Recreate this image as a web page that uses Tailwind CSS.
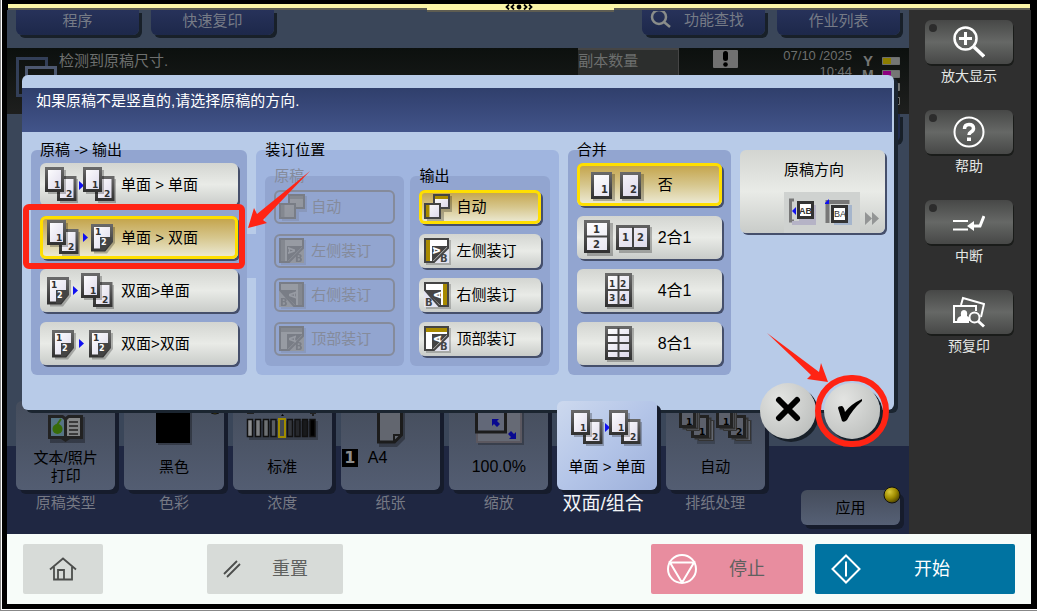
<!DOCTYPE html>
<html lang="zh-CN">
<head>
    <meta charset="UTF-8">
    <meta name="viewport" content="width=device-width, initial-scale=1.0">
    <title>双面/组合</title>
    <script src="https://cdn.jsdelivr.net/npm/@tailwindcss/browser@4"></script>
</head>
<body class="bg-black font-['Liberation_Sans','Noto_Sans_CJK_SC',sans-serif] text-[15px] leading-[18px] text-black">

<!-- shared icons -->
<svg class="absolute size-0" aria-hidden="true">
    <defs>
        <linearGradient id="paper" x1="0" y1="0" x2="1" y2="1"><stop offset="0" stop-color="#fff"/><stop offset="1" stop-color="#dcd8ea"/></linearGradient>
        <linearGradient id="edge" x1="0" y1="0" x2="0" y2="1"><stop offset="0" stop-color="#686868"/><stop offset="1" stop-color="#333"/></linearGradient>
        <radialGradient id="gold" cx=".35" cy=".3" r=".8"><stop offset="0" stop-color="#d9c93a"/><stop offset=".5" stop-color="#a08c00"/><stop offset="1" stop-color="#3c3400"/></radialGradient>
        <g id="sheets" font-family="DejaVu Sans" font-weight="bold" font-size="9" fill="#333">
            <path d="M15 12h18v24H15z" fill="#000" opacity=".25"/>
            <path d="M13.500 10.500h16.500v22H13.500z" fill="url(#paper)" stroke="url(#edge)" stroke-width="3"/>
            <text x="21" y="30">2</text>
            <path d="M3 3h18v24H3z" fill="#000" opacity=".25"/>
            <path d="M1.500 1.500h16v22h-16z" fill="url(#paper)" stroke="url(#edge)" stroke-width="3"/>
            <text x="9" y="21">1</text>
        </g>
        <g id="duplex" font-family="DejaVu Sans" font-weight="bold" font-size="9">
            <path d="M3 3h21v16l-8 10.500H3z" fill="#000" opacity=".25"/>
            <path d="M1.500 1.500h19v16l-7 8.500h-12z" fill="url(#paper)" stroke="url(#edge)" stroke-width="3"/>
            <path d="M9 13h11.500v5l-7 8.500H9z" fill="#444"/>
            <text x="4" y="11" fill="#333">1</text>
            <text x="10" y="21" font-size="8" fill="#fff">2</text>
        </g>
        <path id="next" d="M0 0l5 4.500L0 9z" fill="#1010f0"/>
        <g id="bind-auto">
            <path d="M11 2h17v16H11zM3 11h17v17H3z" fill="#000" opacity=".25"/>
            <path d="M10 1h15v13H10z" fill="url(#paper)" stroke="#444" stroke-width="2"/>
            <path d="M11 2h13v3H11z" fill="#a88a00"/>
            <path d="M1 10h15v14H1z" fill="url(#paper)" stroke="#444" stroke-width="2"/>
            <path d="M2 11h3.500v12H2z" fill="#a88a00"/>
        </g>
        <g id="bind-left" font-family="DejaVu Sans" font-weight="bold">
            <path d="M2 2h25v25H2z" fill="#000" opacity=".2"/>
            <path d="M0 0h25v25H0z" fill="#e4e4f0"/>
            <path d="M1 1h23v9L10 24H1z" fill="#fff" stroke="#444" stroke-width="2"/>
            <path d="M2 2h4v21H2z" fill="#a88a00"/>
            <path d="M8 8h16L8 24z" fill="#444"/>
            <text transform="translate(9 9) rotate(90)" font-size="9" fill="#fff">A</text>
            <text x="16" y="24" font-size="10" fill="#444">B</text>
        </g>
        <g id="bind-right" font-family="DejaVu Sans" font-weight="bold">
            <path d="M2 2h25v25H2z" fill="#000" opacity=".2"/>
            <path d="M0 0h25v25H0z" fill="#e4e4f0"/>
            <path d="M1 1h23v23H15L1 8z" fill="#fff" stroke="#444" stroke-width="2"/>
            <path d="M19 2h4v21h-4z" fill="#a88a00"/>
            <path d="M1 8h16v16z" fill="#444"/>
            <text transform="translate(17 16.500) rotate(-90)" font-size="9" fill="#fff">A</text>
            <text x="1" y="24" font-size="10" fill="#444">B</text>
        </g>
        <g id="bind-top" font-family="DejaVu Sans" font-weight="bold">
            <path d="M2 2h25v25H2z" fill="#000" opacity=".2"/>
            <path d="M0 0h25v25H0z" fill="#e4e4f0"/>
            <path d="M1 1h23v9L10 24H1z" fill="#fff" stroke="#444" stroke-width="2"/>
            <path d="M2 2h21v4H2z" fill="#a88a00"/>
            <path d="M8 8h16L8 24z" fill="#444"/>
            <text transform="translate(17 16.500) rotate(-90)" font-size="9" fill="#fff">A</text>
            <text x="16" y="24" font-size="10" fill="#444">B</text>
        </g>
    </defs>
</svg>

<div class="border-b border-l border-[#888]">
<div class="flex min-h-[calc(100vh-1px)] flex-col border-b border-l border-white bg-black pt-1 pr-[6px] pb-[5px] pl-[5px]">

    <!-- pull-down handle -->
    <div class="relative mx-px h-[6px] border-b-2 border-[#5e5d52] bg-[#fbf5a6]">
        <div class="absolute top-0 left-[41%] z-20 flex h-2 w-[187px] items-center justify-center border-b-2 border-[#5e5d52] bg-[#fbf5a6]">
            <svg class="mr-1" width="30" height="6" viewBox="0 0 30 6" fill="none" stroke="#000" stroke-width="1.800"><path d="M5 .5L2.500 3 5 5.500M10 .5L7.500 3 10 5.500M20 .5L22.500 3 20 5.500M25 .5L27.500 3 25 5.500"/><circle cx="15" cy="3" r="1.500" fill="#000"/></svg>
        </div>
    </div>

    <main class="flex flex-1">
        <div class="relative flex flex-1 flex-col bg-[linear-gradient(to_top,#1f2742_88px,#3a4659_88px)] pb-[9px]">

            <nav class="flex h-[38px] items-start px-[9px] text-[#767b86]">
                <button class="h-[25px] w-[123px] rounded-b-md bg-linear-to-b from-[#27325a] to-[#1d284a] pb-1 shadow-[3px_3px_0_#182029]">程序</button>
                <button class="ml-3 h-[25px] w-[123px] rounded-b-md bg-linear-to-b from-[#27325a] to-[#1d284a] pb-1 shadow-[3px_3px_0_#182029]">快速复印</button>
                <button class="ml-auto flex h-[25px] w-[123px] items-start gap-3 rounded-b-md bg-linear-to-b from-[#27325a] to-[#1d284a] pt-[1px] pl-2 shadow-[3px_3px_0_#182029]">
                    <svg width="22" height="18" viewBox="0 0 22 18" fill="none" stroke="#8a8d8a" stroke-width="2.500"><circle cx="9" cy="6" r="7"/><path d="M14 11l6 5"/></svg>
                    功能查找
                </button>
                <button class="ml-3 h-[25px] w-[123px] rounded-b-md bg-linear-to-b from-[#27325a] to-[#1d284a] pb-1 shadow-[3px_3px_0_#182029]">作业列表</button>
            </nav>

            <section class="flex h-[66px] items-start bg-linear-to-b from-[#0c100e] to-[#1e1f1e] pr-[9px] pl-[9px] text-[#6d6f6e]">
                <svg class="mt-[9px]" width="43" height="42" viewBox="0 0 43 42" fill="none" stroke-width="3"><path d="M30.500 9V1.500h-29v37H10" stroke="#333f58"/><path d="M10.500 40V10.500h29V40" stroke="#4d5870"/></svg>
                <p class="mt-1">检测到原稿尺寸.</p>
                <p class="ml-auto h-[40px] w-[101px] border-t-2 border-r border-[#454545] bg-[#2c2e2d] pt-[2px]">副本数量</p>
                <svg class="mt-[2px] ml-[34px]" width="25" height="18" viewBox="0 0 25 18"><rect width="25" height="18" rx="1" fill="#717171"/><rect x="10" y="1" width="5" height="10" rx="2.500"/><circle cx="12.500" cy="14.500" r="2.300"/></svg>
                <p class="ml-[45px] text-right text-[13px] leading-4">07/10 /2025<br>10:44</p>
                <svg class="mt-2 ml-2" width="40" height="54" viewBox="-2 0 40 54">
                    <g font-family="Liberation Sans" font-weight="bold" fill="#747674"><text x="1" y="10" font-size="15">Y</text><text x="0" y="24" font-size="14">M</text></g>
                    <g fill="#747674" stroke="#6d6f6e"><path d="M20.500 1.500h17v7h-17zM20.500 14.500h17v7h-17zM20.500 27.500h17v7h-17z"/><path d="M20.500 41.500h17v7h-17z" fill="#111"/></g>
                    <path d="M21 2h8v6h-8z" fill="#8c7d00"/><path d="M21 15h8v6h-8z" fill="#8c0080"/>
                </svg>
            </section>
            <div class="mr-[9px] ml-auto h-7 w-[150px] rounded-b-md bg-[#202b4f] shadow-[3px_3px_0_#182029]"></div>

            <!-- function tiles -->
            <div class="mt-auto flex items-start gap-9 px-[9px]">
                <div class="grid flex-1 grid-cols-7 gap-[9px] text-center">
                    <div>
                        <button class="block h-[89px] w-full rounded-md bg-linear-to-b from-[#454d5c] to-[#535d72] pb-[5px] shadow-[4px_4px_0_#161c2c]">
                            <svg class="mx-auto h-12 w-[99px]" viewBox="0 0 99 48"><path d="M34 16h35v26H34z" fill="#000" opacity=".3"/><path d="M32 14h15l2.500 2 2.500-2h15v24H54l-4.500 3-4.500-3H32z" fill="#222"/><path d="M35 17h11l2 2v16H35z" fill="#567484"/><path d="M64 17H53l-2 2v16h13z" fill="#848687"/><circle cx="41.500" cy="28" r="5" fill="#386c08"/><path d="M41 24l4-6" stroke="#386c08" stroke-width="2"/><path d="M53 21h9M53 25h9M53 29h9M53 33h9" stroke="#222" stroke-width="1.500"/></svg>
                            <span class="flex h-9 items-center justify-center">文本/照片<br>打印</span>
                        </button>
                        <p class="h-[26px] leading-[26px] text-[#767984]">原稿类型</p>
                    </div>
                    <div>
                        <button class="block h-[89px] w-full rounded-md bg-linear-to-b from-[#454d5c] to-[#535d72] pb-[5px] shadow-[4px_4px_0_#161c2c]">
                            <svg class="mx-auto h-12 w-[99px]" viewBox="0 0 99 48"><path d="M34 4h34v40H34z" opacity=".3"/><path d="M32 4h34v38H32z"/><circle cx="91" cy="5" r="8" fill="url(#gold)" stroke="#111"/></svg>
                            <span class="flex h-9 items-center justify-center">黑色</span>
                        </button>
                        <p class="h-[26px] leading-[26px] text-[#767984]">色彩</p>
                    </div>
                    <div>
                        <button class="block h-[89px] w-full rounded-md bg-linear-to-b from-[#454d5c] to-[#535d72] pb-[5px] shadow-[4px_4px_0_#161c2c]">
                            <svg class="mx-auto h-12 w-[99px]" viewBox="0 0 99 48"><path d="M14 12h7M77 12h6M80 9v6" stroke="#222" stroke-width="2"/><path d="M48 15l1.500-2 1.500 2z"/><path d="M16 20h69v19H16z" opacity=".25"/>
                                <g stroke="#111" stroke-width="1.500"><path d="M14.500 18.500h5v17h-5z" fill="#8b8d8f"/><path d="M22.500 18.500h5v17h-5z" fill="#7d7f82"/><path d="M30.500 18.500h5v17h-5z" fill="#6d7073"/><path d="M38 18.500h5v17h-5z" fill="#585c62"/><path d="M54.500 18.500h5v17h-5z" fill="#34373c"/><path d="M62 18.500h5v17h-5z" fill="#25272b"/><path d="M69.500 18.500h5v17h-5z" fill="#181a1c"/><path d="M77 18.500h5v17h-5z"/></g>
                                <path d="M46 18h6v18h-6z" fill="#444a53" stroke="#a08c00" stroke-width="2"/></svg>
                            <span class="flex h-9 items-center justify-center">标准</span>
                        </button>
                        <p class="h-[26px] leading-[26px] text-[#767984]">浓度</p>
                    </div>
                    <div>
                        <button class="block h-[89px] w-full rounded-md bg-linear-to-b from-[#454d5c] to-[#535d72] pb-[5px] shadow-[4px_4px_0_#161c2c]">
                            <svg class="mx-auto h-12 w-[99px]" viewBox="0 0 99 48"><path d="M38 4h26v34l-8 8H38z" opacity=".3"/><path d="M37.500 4h23v30l-7 7h-16z" fill="#62666f" stroke="#1c1c1c" stroke-width="3"/><path d="M53 41v-7h7" fill="none" stroke="#1c1c1c" stroke-width="2"/></svg>
                            <span class="flex h-9 items-start gap-[10px] pl-px text-base leading-[18px]"><span class="h-[18px] w-4 bg-black font-['DejaVu_Sans'] font-bold text-[#8d8d8d]">1</span>A4</span>
                        </button>
                        <p class="h-[26px] leading-[26px] text-[#767984]">纸张</p>
                    </div>
                    <div>
                        <button class="block h-[89px] w-full rounded-md bg-linear-to-b from-[#454d5c] to-[#535d72] pb-[5px] shadow-[4px_4px_0_#161c2c]">
                            <svg class="mx-auto h-12 w-[99px]" viewBox="0 0 99 48"><path d="M29 4h46v40H29z" opacity=".25"/><path d="M28 4h44v37H28z" fill="#666a75" stroke="#5b5860" stroke-width="2"/><path d="M27.500 4h29v27h-29z" fill="#626878" stroke="#1c1c1c" stroke-width="3"/><path d="M43 18h7l-2 2 3 3-3 3-3-3-2 2zM67 38h-7l2-2-3-3 3-3 3 3 2-2z" fill="#080890"/></svg>
                            <span class="flex h-9 items-center justify-center text-base">100.0%</span>
                        </button>
                        <p class="h-[26px] leading-[26px] text-[#767984]">缩放</p>
                    </div>
                    <div>
                        <button class="relative z-20 block h-[89px] w-full rounded-md bg-linear-to-br from-[#cdd9ee] via-[#b4c5e8] to-[#9db0db] pb-[5px] shadow-[4px_4px_0_#161c2c]">
                            <svg class="mx-auto h-12 w-[99px]" viewBox="0 0 99 48"><use href="#sheets" x="13" y="9"/><use href="#next" x="47" y="22"/><use href="#sheets" x="51" y="9"/></svg>
                            <span class="flex h-9 items-center justify-center whitespace-nowrap">单面 &gt; 单面</span>
                        </button>
                        <p class="h-[26px] pr-2 text-[19px] leading-[28px] whitespace-nowrap text-[#f2f4f6]">双面/组合</p>
                    </div>
                    <div>
                        <button class="block h-[89px] w-full rounded-md bg-linear-to-b from-[#454d5c] to-[#535d72] pb-[5px] shadow-[4px_4px_0_#161c2c]">
                            <svg class="mx-auto h-12 w-[99px]" viewBox="0 0 99 48" font-family="DejaVu Sans" font-weight="bold" font-size="9">
                                <g id="stack"><path d="M31 19h18v24H31z" opacity=".2"/><path d="M32.500 19.500h15v20h-15z" fill="#62666f" stroke="#333"/><path d="M29.500 17.500h15v20h-15z" fill="#62666f" stroke="#333" stroke-width="2"/><path d="M26.500 15.500h15v20h-15z" fill="#5c606b" stroke="#222" stroke-width="3"/><path d="M20.500 10.500h13v19h-13z" fill="#62666f" stroke="#333"/><path d="M17.500 8.500h14v19h-14z" fill="#62666f" stroke="#333" stroke-width="2"/><path d="M14.500 6.500h14v19h-14z" fill="#5c606b" stroke="#222" stroke-width="3"/><text x="20" y="24">1</text></g>
                                <text x="33" y="34">1</text><use href="#stack" x="37"/><text x="70" y="34">2</text></svg>
                            <span class="flex h-9 items-center justify-center">自动</span>
                        </button>
                        <p class="h-[26px] leading-[26px] text-[#767984]">排纸处理</p>
                    </div>
                </div>
                <button class="relative mt-[89px] h-[35px] w-[99px] rounded-md bg-linear-to-b from-[#454d5c] to-[#566075] shadow-[4px_4px_0_#161c2c]">应用
                    <svg class="absolute -top-1 -right-px" width="18" height="18" viewBox="0 0 18 18"><circle cx="9" cy="9" r="8" fill="url(#gold)" stroke="#111"/></svg>
                </button>
            </div>

            <!-- duplex / combine dialog -->
            <div role="dialog" aria-label="双面/组合" class="absolute top-[65px] right-[15px] left-[15px] z-10 rounded-md bg-[#b8cbe8] pt-[13px] pb-[35px] shadow-[4px_3px_0_#1b2530]">
                <h1 class="mr-[2px] h-11 bg-linear-to-b from-[#303f6c] to-[#42548a] px-[14px] pt-1 text-white">如果原稿不是竖直的,请选择原稿的方向.</h1>

                <div class="grid grid-cols-[216fr_302fr_163fr_145fr] gap-[9px] px-[9px] pt-[9px]">
                    <fieldset class="flex flex-col gap-[10px] rounded-md bg-[#92a5d0] px-[9px] pt-1 pb-[10px]">
                        <legend>原稿 -&gt; 输出</legend>
                        <button class="flex h-[43px] items-center rounded-md bg-linear-to-b from-[#d3d5d1] via-[#e9ebe7] to-[#c9ccc9] shadow-[2px_2px_0_#454f6b]">
                            <svg class="h-[43px] w-[81px]" viewBox="0 0 81 43"><use href="#sheets" x="5" y="4"/><use href="#next" x="39" y="18"/><use href="#sheets" x="43" y="4"/></svg>单面 &gt; 单面
                        </button>
                        <button aria-pressed="true" class="relative flex h-[43px] items-center rounded-md bg-linear-to-b from-[#c2a03f] via-[#d6c68c] to-[#efeedc] shadow-[inset_0_0_0_3px_#ffdf00,2px_2px_0_#454f6b]">
                            <svg class="h-[43px] w-[81px]" viewBox="0 0 81 43"><use href="#sheets" x="7" y="4"/><use href="#next" x="43" y="17"/><use href="#duplex" x="51" y="8"/></svg>单面 &gt; 双面
                            <span class="absolute -top-3 -right-[7px] -bottom-[10px] -left-[17px] rounded-md border-6 border-[#ff2414]"></span>
                        </button>
                        <button class="flex h-[43px] items-center rounded-md bg-linear-to-b from-[#d3d5d1] via-[#e9ebe7] to-[#c9ccc9] shadow-[2px_2px_0_#454f6b]">
                            <svg class="h-[43px] w-[81px]" viewBox="0 0 81 43"><use href="#duplex" x="7" y="8"/><use href="#next" x="33" y="17"/><use href="#sheets" x="41" y="4"/></svg>双面&gt;单面
                        </button>
                        <button class="flex h-[43px] items-center rounded-md bg-linear-to-b from-[#d3d5d1] via-[#e9ebe7] to-[#c9ccc9] shadow-[2px_2px_0_#454f6b]">
                            <svg class="h-[43px] w-[81px]" viewBox="0 0 81 43"><use href="#duplex" x="12" y="8"/><use href="#next" x="39" y="17"/><use href="#duplex" x="49" y="8"/></svg>双面&gt;双面
                        </button>
                    </fieldset>

                    <fieldset class="relative grid grid-cols-2 gap-[6px] rounded-md bg-[#a0b5df] px-[9px] pt-2 pb-[9px]">
                        <legend>装订位置</legend>
                        <fieldset disabled class="flex flex-col gap-[10px] rounded-md bg-[#92a5d0] px-[9px] pt-[5px] pb-[10px] text-[#858b9b]">
                            <legend>原稿</legend>
                            <button class="flex h-[34px] items-center gap-1 rounded-md border-2 border-[#858b9b] pl-[3px]"><svg class="opacity-80 contrast-[.2] grayscale" width="28" height="28"><use href="#bind-auto" x="0" y="1"/></svg>自动</button>
                            <button class="flex h-[34px] items-center gap-1 rounded-md border-2 border-[#858b9b] pl-[3px]"><svg class="opacity-80 contrast-[.2] grayscale" width="28" height="28"><use href="#bind-left" x="0" y="1"/></svg>左侧装订</button>
                            <button class="flex h-[34px] items-center gap-1 rounded-md border-2 border-[#858b9b] pl-[3px]"><svg class="opacity-80 contrast-[.2] grayscale" width="28" height="28"><use href="#bind-right" x="0" y="1"/></svg>右侧装订</button>
                            <button class="flex h-[34px] items-center gap-1 rounded-md border-2 border-[#858b9b] pl-[3px]"><svg class="opacity-80 contrast-[.2] grayscale" width="28" height="28"><use href="#bind-top" x="0" y="1"/></svg>顶部装订</button>
                        </fieldset>
                        <fieldset class="flex flex-col gap-[10px] rounded-md bg-[#92a5d0] px-[9px] pt-[5px] pb-[10px]">
                            <legend>输出</legend>
                            <button aria-pressed="true" class="flex h-[34px] items-center gap-1 rounded-md bg-linear-to-b from-[#c2a03f] via-[#d6c68c] to-[#efeedc] pl-[5px] shadow-[inset_0_0_0_3px_#ffdf00,2px_2px_0_#454f6b]"><svg width="28" height="28"><use href="#bind-auto" x="0" y="1"/></svg>自动</button>
                            <button class="flex h-[34px] items-center gap-1 rounded-md bg-linear-to-b from-[#d3d5d1] via-[#e9ebe7] to-[#c9ccc9] pl-[5px] shadow-[2px_2px_0_#454f6b]"><svg width="28" height="28"><use href="#bind-left" x="0" y="1"/></svg>左侧装订</button>
                            <button class="flex h-[34px] items-center gap-1 rounded-md bg-linear-to-b from-[#d3d5d1] via-[#e9ebe7] to-[#c9ccc9] pl-[5px] shadow-[2px_2px_0_#454f6b]"><svg width="28" height="28"><use href="#bind-right" x="0" y="1"/></svg>右侧装订</button>
                            <button class="flex h-[34px] items-center gap-1 rounded-md bg-linear-to-b from-[#d3d5d1] via-[#e9ebe7] to-[#c9ccc9] pl-[5px] shadow-[2px_2px_0_#454f6b]"><svg width="28" height="28"><use href="#bind-top" x="0" y="1"/></svg>顶部装订</button>
                        </fieldset>
                        <span class="absolute top-[75px] -left-[9px] h-11 w-[9px] bg-[#a0b5df]"></span>
                        <svg class="absolute top-[9px] -left-[10px]" width="66" height="64" viewBox="0 0 66 64"><path d="M64 3L11 46 8 40 2 60 21 55 17 52z" fill="#ff2414"/></svg>
                    </fieldset>

                    <fieldset class="flex flex-col gap-[10px] rounded-md bg-[#92a5d0] px-[9px] pt-1 pb-[10px]">
                        <legend>合并</legend>
                        <button aria-pressed="true" class="flex h-[43px] items-center rounded-md bg-linear-to-b from-[#c2a03f] via-[#d6c68c] to-[#efeedc] shadow-[inset_0_0_0_3px_#ffdf00,2px_2px_0_#454f6b]">
                            <svg class="h-[43px] w-[81px]" viewBox="0 0 81 43" font-family="DejaVu Sans" font-weight="bold" font-size="10" fill="#333"><path d="M16 11h22v27H16zM45 11h22v27H45z" fill="#000" opacity=".25"/><path d="M15.500 10.500h18v24h-18zM44.500 10.500h18v24h-18z" fill="url(#paper)" stroke="url(#edge)" stroke-width="3"/><text x="24" y="30">1</text><text x="53" y="30">2</text></svg>否
                        </button>
                        <button class="flex h-[43px] items-center rounded-md bg-linear-to-b from-[#d3d5d1] via-[#e9ebe7] to-[#c9ccc9] text-base shadow-[2px_2px_0_#454f6b]">
                            <svg class="h-[43px] w-[81px]" viewBox="0 0 81 43" font-family="DejaVu Sans" font-weight="bold" font-size="10" fill="#333"><path d="M10 7h26v33H10zM42 11h33v26H42z" fill="#000" opacity=".25"/><path d="M8.500 5.500h23v30h-23zM40.500 10.500h31v22h-31z" fill="url(#paper)" stroke="url(#edge)" stroke-width="3"/><path d="M9 20.500h22M56 11v22" stroke="#444" stroke-width="2"/><text x="16" y="17">1</text><text x="16" y="32">2</text><text x="45" y="25">1</text><text x="60" y="25">2</text></svg>2合1
                        </button>
                        <button class="flex h-[43px] items-center rounded-md bg-linear-to-b from-[#d3d5d1] via-[#e9ebe7] to-[#c9ccc9] text-base shadow-[2px_2px_0_#454f6b]">
                            <svg class="h-[43px] w-[81px]" viewBox="0 0 81 43" font-family="DejaVu Sans" font-weight="bold" font-size="9" fill="#333"><path d="M30 6h27v34H30z" fill="#000" opacity=".25"/><path d="M29.500 5.500h24v31h-24z" fill="url(#paper)" stroke="url(#edge)" stroke-width="3"/><path d="M30 21h23M41.500 6v30" stroke="#444" stroke-width="2"/><text x="32" y="18">1</text><text x="43" y="18">2</text><text x="32" y="32">3</text><text x="43" y="32">4</text></svg>4合1
                        </button>
                        <button class="flex h-[43px] items-center rounded-md bg-linear-to-b from-[#d3d5d1] via-[#e9ebe7] to-[#c9ccc9] text-base shadow-[2px_2px_0_#454f6b]">
                            <svg class="h-[43px] w-[81px]" viewBox="0 0 81 43"><path d="M30 6h27v34H30z" opacity=".25"/><path d="M29.500 5.500h24v31h-24z" fill="url(#paper)" stroke="url(#edge)" stroke-width="3"/><path d="M30 13h23M30 21h23M30 29h23M41.500 6v30" stroke="#444" stroke-width="2"/></svg>8合1
                        </button>
                    </fieldset>

                    <button class="mt-[9px] flex h-[83px] flex-col items-end gap-[13px] rounded-md bg-linear-to-b from-[#d3d5d1] via-[#e9ebe7] to-[#c9ccc9] pt-[11px] pr-[3px] shadow-[2px_2px_0_#454f6b]">
                        <span class="pr-[38px]">原稿方向</span>
                        <svg width="98" height="41" viewBox="0 0 98 41" font-family="Liberation Sans" font-size="10">
                            <path d="M0 0h76v41H0z" fill="#cfd2d0"/>
                            <path d="M10 8H6.500v21H10" fill="none" stroke="#777" stroke-width="3"/><path d="M12 15l-4 4 4 4z" fill="#1010f0"/>
                            <path d="M15 13h17v20H8v-4h7z" fill="#b5b3c6"/><path d="M14.500 10.500h14v15h-14z" fill="#fff" stroke="#333" stroke-width="3"/><text x="15" y="22" fill="#333" font-size="9" font-weight="bold">AB</text>
                            <path d="M50 13h18v20H50z" fill="#a5b5cc"/><path d="M43.500 31V10h22" fill="none" stroke="#777" stroke-width="4"/><path d="M41 12v-1l4-4v5z" fill="#1010f0"/><path d="M48.500 14.500h14v15h-14z" fill="#fff" stroke="#333" stroke-width="3"/><text x="50" y="25" font-size="9" fill="#333">BA</text>
                            <path d="M81 20l7 6.500-7 6.500zM88 20l7 6.500-7 6.500z" fill="#939595"/>
                        </svg>
                    </button>
                </div>

                <div class="absolute right-[14px] -bottom-[29px] flex gap-2">
                    <button aria-label="取消" class="flex size-14 items-center justify-center rounded-full bg-radial-[at_35%_30%] from-[#e3e4e2] to-[#b4b7b5] pb-1 shadow-[3px_3px_0_#182029]">
                        <svg width="26" height="26" viewBox="0 0 26 26" stroke="#000" stroke-width="6" stroke-linecap="round"><path d="M4 4l18 18M22 4L4 22"/></svg>
                    </button>
                    <button aria-label="确定" class="relative flex size-14 items-center justify-center rounded-full bg-radial-[at_35%_30%] from-[#e3e4e2] to-[#b4b7b5] pr-1 shadow-[3px_3px_0_#182029]">
                        <svg width="26" height="24" viewBox="0 0 26 24"><path d="M1 9q0-2 4-2 2 1 3 6Q14 5 25 0v2Q15 11 10 21q-3 3-5 1z"/></svg>
                        <span class="absolute -inset-x-[9px] -inset-y-2 rounded-full border-6 border-[#ff2414]"></span>
                    </button>
                    <svg class="absolute -top-[50px] left-[6px]" width="64" height="52" viewBox="0 0 64 52"><path d="M1 0L53 39 55 30 62 49 41 46 45 42z" fill="#ff2414"/></svg>
                </div>
            </div>
        </div>

        <!-- side keys -->
        <aside class="flex w-[122px] flex-col gap-[22px] bg-[#2f2f2f] pt-[10px] pr-[18px] pl-4 text-center text-sm text-[#e4e6e4]">
            <div>
                <button aria-label="放大显示" class="relative flex h-11 w-full items-center justify-center rounded-md bg-linear-to-b from-[#474847] via-[#666866] to-[#474847] shadow-[1px_2px_0_#1a1c1a]">
                    <span class="absolute top-1 left-1 size-2 rounded-full bg-[#2c2c2c]"></span>
                    <svg width="32" height="32" viewBox="0 0 32 32" fill="none" stroke="#fff" stroke-width="2.500"><circle cx="12.500" cy="12.500" r="11"/><path d="M12.500 6v13M6 12.500h13" stroke-width="3"/><path d="M21 21l10 9.500" stroke-width="3.500"/></svg>
                </button>
                <p class="h-6 leading-6">放大显示</p>
            </div>
            <div>
                <button aria-label="帮助" class="relative flex h-11 w-full items-center justify-center rounded-md bg-linear-to-b from-[#474847] via-[#666866] to-[#474847] shadow-[1px_2px_0_#1a1c1a]">
                    <span class="absolute top-1 left-1 size-2 rounded-full bg-[#2c2c2c]"></span>
                    <svg width="32" height="32" viewBox="0 0 32 32" fill="none" stroke="#fff"><circle cx="16" cy="16" r="14.500" stroke-width="2"/><path d="M11.500 13q0-4.500 4.500-4.500t4.500 4q0 2-2.500 3.500-2 1.200-2 3" stroke-width="3.500"/><path d="M14 21.500h4V25h-4z" fill="#fff" stroke="none"/></svg>
                </button>
                <p class="h-6 leading-6">帮助</p>
            </div>
            <div>
                <button aria-label="中断" class="relative flex h-11 w-full items-center justify-center rounded-md bg-linear-to-b from-[#474847] via-[#666866] to-[#474847] shadow-[1px_2px_0_#1a1c1a]">
                    <span class="absolute top-1 left-1 size-2 rounded-full bg-[#2c2c2c]"></span>
                    <svg width="32" height="32" viewBox="0 0 32 32" fill="none" stroke="#fff"><path d="M0 15h15M0 23.500h15" stroke-width="2"/><path d="M20 20h7l4-10" stroke-width="3"/><path d="M14 20l7-5v10z" fill="#fff" stroke="none"/></svg>
                </button>
                <p class="h-6 leading-6">中断</p>
            </div>
            <div>
                <button aria-label="预复印" class="flex h-11 w-full items-center justify-center rounded-md bg-linear-to-b from-[#474847] via-[#666866] to-[#474847] shadow-[1px_2px_0_#1a1c1a]">
                    <svg width="32" height="32" viewBox="0 0 32 32" fill="none" stroke="#fff" stroke-width="2"><path d="M8 9l2-7 21 6-3 13"/><path d="M16 26H1V10h22v5"/><path d="M4 25q0-4 4-5-1-6 3-6t3 6q3 1 3 5z" fill="#fff" stroke="none"/><circle cx="21.500" cy="21.500" r="5"/><path d="M25 25l6 5.500" stroke-width="3"/></svg>
                </button>
                <p class="h-6 leading-6">预复印</p>
            </div>
        </aside>
    </main>

    <footer class="flex items-center bg-[#f7fcf9] px-4 py-[10px] text-lg text-[#5f615f]">
        <button aria-label="主页" class="flex h-[50px] w-20 items-center justify-center rounded-xs bg-[#d7dbd8]">
            <svg width="28" height="24" viewBox="0 0 28 24" fill="none" stroke="#4c4e4c" stroke-width="1.800"><path d="M1 12.500L14 1.500l13 11M5 10v12.500h18V10M9 22.500V13h6v9.500"/></svg>
        </button>
        <button class="ml-[104px] flex h-[50px] w-[136px] items-center gap-[31px] rounded-xs bg-[#d7dbd8] pl-4">
            <svg width="18" height="18" viewBox="0 0 18 18" fill="none" stroke="#4c4e4c" stroke-width="1.800"><path d="M1 14L14 1M4 17L17 4"/></svg>重置
        </button>
        <button class="ml-auto flex h-[50px] w-[152px] items-center gap-8 rounded-xs bg-[#e88d9f] pl-4">
            <svg width="30" height="30" viewBox="0 0 30 30" fill="none" stroke="#fff" stroke-width="2"><circle cx="15" cy="15" r="14"/><path d="M3 8.500h24L16 27h-2z"/></svg>停止
        </button>
        <button class="ml-3 flex h-[50px] w-[200px] items-center gap-[53px] rounded-xs bg-[#0073a1] pl-4 text-white">
            <svg width="30" height="30" viewBox="0 0 30 30" fill="none" stroke="#fff" stroke-width="2"><path d="M15 1.500L28.500 15 15 28.500 1.500 15zM15 7.500v15"/></svg>开始
        </button>
    </footer>
</div>
</div>
</body>
</html>
